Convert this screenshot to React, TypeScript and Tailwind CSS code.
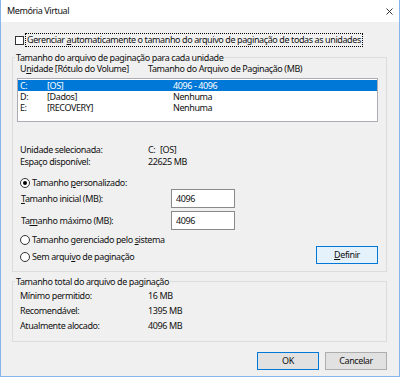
import React from "react";

function Radio({ checked, children }: { checked?: boolean; children: React.ReactNode }) {
  return (
    <div className="flex items-center h-[13px] ml-[7px]">
      <span className="w-[10px] h-[10px] rounded-full border border-[#333333] bg-white flex items-center justify-center shrink-0">
        {checked && <span className="w-[4px] h-[4px] rounded-full bg-black" />}
      </span>
      <span className="ml-[2px] whitespace-nowrap">{children}</span>
    </div>
  );
}

function Legend({ children }: { children: React.ReactNode }) {
  return (
    <div className="-mt-[6px] ml-[2px] px-[1px] self-start bg-[#f0f0f0] h-[11px] leading-[11px] whitespace-nowrap">
      {children}
    </div>
  );
}

export default function App() {
  const rows = [
    { d: "C:", l: "[OS]", s: "4096 - 4096", sel: true },
    { d: "D:", l: "[Dados]", s: "Nenhuma", sel: false },
    { d: "E:", l: "[RECOVERY]", s: "Nenhuma", sel: false },
  ];
  return (
    <div className="w-[400px] h-[377px] bg-[#f0f0f0] border-x border-b border-[#88b5ea] flex flex-col font-['Noto_Sans',sans-serif] text-[9px] tracking-[-0.4px] text-[#111111] leading-[12px] overflow-hidden">
      {/* title bar */}
      <div className="h-[22px] bg-white flex items-center pl-[6px] pr-[6px] shrink-0">
        <span className="flex-1">Memória Virtual</span>
        <svg width="7" height="7" viewBox="0 0 7 7">
          <path d="M0.5 0.5L6.5 6.5M6.5 0.5L0.5 6.5" stroke="#222222" strokeWidth="0.9" />
        </svg>
      </div>

      {/* checkbox */}
      <div className="mt-[11px] ml-[14px] flex items-center h-[14px]">
        <div className="w-[9px] h-[9px] border border-[#333333] bg-white shrink-0" />
        <div className="ml-[1px] h-[14px] px-[1px] border border-dotted border-black leading-[12px] whitespace-nowrap">
          Gerenciar <u className="underline-offset-1">a</u>utomaticamente o tamanho do arquivo de paginação de todas as unidades
        </div>
      </div>

      {/* group 1 */}
      <div className="mt-[10px] ml-[11px] w-[375px] border border-[#dcdcdc] flex flex-col pb-[7px]">
        <Legend>Tamanho do arquivo de paginação para cada unidade</Legend>
        <div className="h-[11px] leading-[11px] flex pl-[7px] whitespace-nowrap">
          <span className="w-[128px]">
            U<u>n</u>idade [Rótulo do Volume]
          </span>
          <span>Tamanho do Arquivo de Paginação (MB)</span>
        </div>
        <div className="mt-[4px] ml-[4px] w-[361px] h-[44px] border border-[#abadb3] bg-white pt-[1px]">
          {rows.map((r) => (
            <div
              key={r.d}
              className={
                r.sel
                  ? "h-[11px] leading-[11px] flex pl-[2px] bg-[#0078d7] text-white"
                  : "h-[11px] leading-[11px] flex pl-[2px]"
              }
            >
              <span className="w-[27px]">{r.d}</span>
              <span className="w-[126px]">{r.l}</span>
              <span>{r.s}</span>
            </div>
          ))}
        </div>
        <div className="mt-[22px] h-[12px] flex pl-[7px]">
          <span className="w-[128px]">Unidade selecionada:</span>
          <span className="w-[12px]">C:</span>
          <span>[OS]</span>
        </div>
        <div className="h-[12px] flex pl-[7px]">
          <span className="w-[128px]">Espaço disponível:</span>
          <span>22625 MB</span>
        </div>
        <div className="mt-[8px]">
          <Radio checked>
            Tamanho <u>p</u>ersonalizado:
          </Radio>
        </div>
        <div className="h-[19px] flex items-center pl-[8px]">
          <span className="w-[150px]">
            <u>T</u>amanho inicial (MB):
          </span>
          <div className="w-[64px] h-[19px] border border-[#8a8a8a] bg-white pl-[4px] flex items-center">4096</div>
        </div>
        <div className="mt-[3px] h-[19px] flex items-center pl-[8px]">
          <span className="w-[150px]">
            Ta<u>m</u>anho máximo (MB):
          </span>
          <div className="w-[64px] h-[19px] border border-[#8a8a8a] bg-white pl-[4px] flex items-center">4096</div>
        </div>
        <div className="mt-[3px] flex">
          <div className="flex flex-col">
            <Radio>
              Tamanho gerenciado pelo <u>s</u>istema
            </Radio>
            <div className="mt-[4px]">
              <Radio>
                Sem arqui<u>v</u>o de paginação
              </Radio>
            </div>
          </div>
          <div className="ml-auto mr-[8px] mt-[13px] w-[62px] h-[18px] border border-[#0078d7] bg-[#e5f1fb] flex items-center justify-center">
            <span>
              <u>D</u>efinir
            </span>
          </div>
        </div>
      </div>

      {/* group 2 */}
      <div className="mt-[9px] ml-[11px] w-[375px] border border-[#dcdcdc] flex flex-col pb-[8px]">
        <Legend>Tamanho total do arquivo de paginação</Legend>
        <div className="mt-[1px] h-[15px] flex items-center pl-[7px]">
          <span className="w-[128px]">Mínimo permitido:</span>
          <span>16 MB</span>
        </div>
        <div className="h-[15px] flex items-center pl-[7px]">
          <span className="w-[128px]">Recomendável:</span>
          <span>1395 MB</span>
        </div>
        <div className="h-[15px] flex items-center pl-[7px]">
          <span className="w-[128px]">Atualmente alocado:</span>
          <span>4096 MB</span>
        </div>
      </div>

      {/* buttons */}
      <div className="mt-[10px] flex justify-end gap-[6px] pr-[12px]">
        <div className="w-[62px] h-[18px] border border-[#0078d7] bg-[#e1e1e1] flex items-center justify-center">OK</div>
        <div className="w-[62px] h-[18px] border border-[#adadad] bg-[#e1e1e1] flex items-center justify-center">Cancelar</div>
      </div>
    </div>
  );
}
